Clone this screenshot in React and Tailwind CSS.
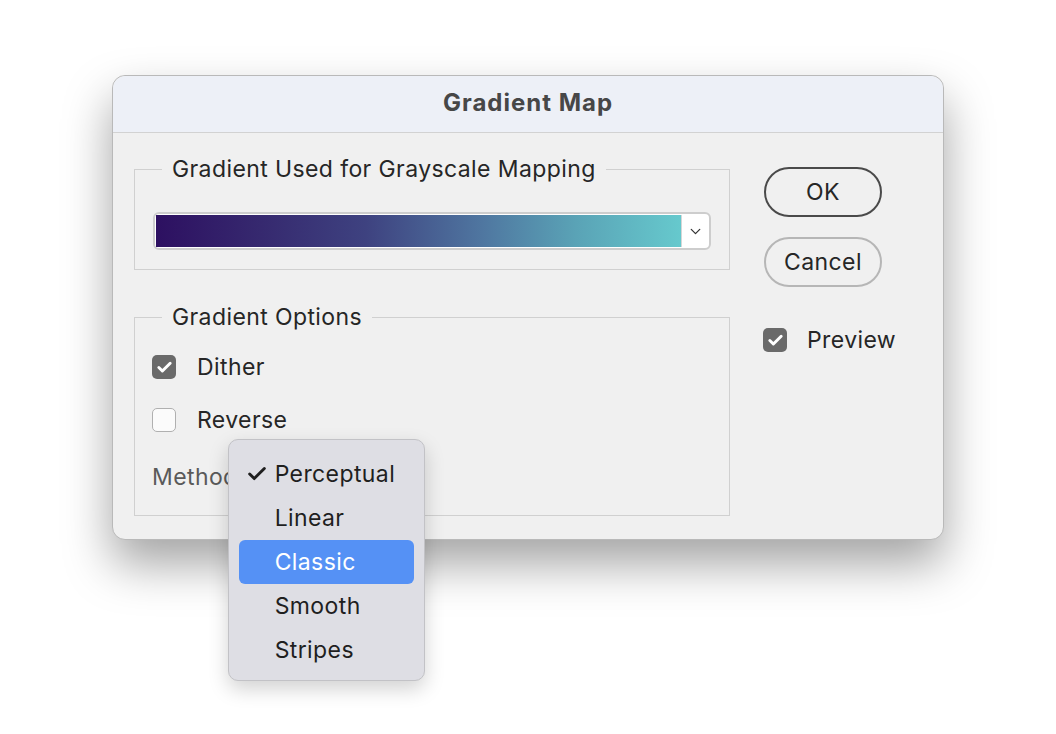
import { Check, ChevronDown } from "lucide-react";

const font = { fontFamily: "Inter, 'Noto Sans', sans-serif" };

const CheckBox = ({ checked }) =>
    checked ? (
        <span className="w-[24px] h-[24px] rounded-[5px] bg-[#6a6a6a] flex items-center justify-center shrink-0">
            <Check size={17} strokeWidth={4.2} className="text-white" />
        </span>
    ) : (
        <span className="w-[24px] h-[24px] rounded-[5px] bg-[#fbfbfb] border-[1.5px] border-[#b0b0b0] shrink-0" />
    );

const methods = ["Perceptual", "Linear", "Classic", "Smooth", "Stripes"];

export default function App() {
    return (
        <div style={font} className="w-[1056px] h-[734px] bg-white pt-[75px] pl-[112px] text-[#262626] tracking-[0.4px]">
            <div className="w-[832px] h-[465px] rounded-[13px] border border-[#b9b9b9] bg-[#f0f0f0] shadow-[0_24px_48px_rgba(0,0,0,0.36)] flex flex-col">
                {/* Title bar */}
                <div className="h-[57px] shrink-0 rounded-t-[13px] bg-[#edf0f7] border-b border-[#d2d2d2] flex items-center justify-center pb-[3px]">
                    <span className="text-[24px] font-bold text-[#474747] tracking-[1px]">Gradient Map</span>
                </div>

                {/* Body */}
                <div className="flex pl-[21px]">
                    <div className="w-[596px] pt-[23px]">
                        <fieldset className="border border-[#d0d0d0] h-[114px] px-0">
                            <legend className="ml-[27px] px-[10px] text-[23px] leading-[26px]">
                                Gradient Used for Grayscale Mapping
                            </legend>
                            <div className="ml-[18px] mt-[30px] w-[558px] h-[38px] rounded-[6px] border-2 border-[#cdcdcd] bg-white flex p-px">
                                <div className="flex-1 bg-[linear-gradient(90deg,#2d1061_0%,#36296f_20%,#3e4280_40%,#4f76a0_62%,#5aa3b6_80%,#66c9cd_100%)]" />
                                <div className="w-[27px] border-l border-[#d6d6d6] flex items-center justify-center">
                                    <ChevronDown size={17} strokeWidth={1.8} className="text-[#333]" />
                                </div>
                            </div>
                        </fieldset>

                        <fieldset className="mt-[34px] border border-[#d0d0d0] h-[212px] px-0">
                            <legend className="ml-[27px] px-[10px] text-[23px] leading-[26px]">Gradient Options</legend>
                            <div className="pl-[17px] pt-[25px] flex flex-col">
                                <div className="flex items-center gap-[21px] h-[24px]">
                                    <CheckBox checked />
                                    <span className="text-[23px]">Dither</span>
                                </div>
                                <div className="flex items-center gap-[21px] h-[24px] mt-[29px]">
                                    <CheckBox />
                                    <span className="text-[23px]">Reverse</span>
                                </div>
                                <div className="flex items-center h-[36px] mt-[27px]">
                                    <span className="text-[23px] text-[#5a5a5a]">Method:</span>
                                    <div className="relative ml-[2px]">
                                        <div className="w-[178px] h-[36px] rounded-[6px] border border-[#8c8c8c] bg-white" />
                                        {/* Popup menu */}
                                        <div className="absolute left-[-19px] top-[-20px] w-[197px] rounded-[10px] border border-[#c2c2c6] bg-[#dedee4] shadow-[0_8px_20px_rgba(0,0,0,0.18)] pt-[12px] pb-[8px] px-[10px] z-10">
                                            {methods.map((m) => (
                                                <div
                                                    key={m}
                                                    className={
                                                        m === "Classic"
                                                            ? "h-[44px] rounded-[6px] bg-[#5591f5] text-white flex items-center"
                                                            : "h-[44px] flex items-center text-[#1f1f1f]"
                                                    }
                                                >
                                                    <span className="w-[36px] flex justify-center pl-[1px]">
                                                        {m === "Perceptual" && (
                                                            <Check size={22} strokeWidth={3.2} className="text-[#1f1f1f]" />
                                                        )}
                                                    </span>
                                                    <span className="text-[23px]">{m}</span>
                                                </div>
                                            ))}
                                        </div>
                                    </div>
                                </div>
                            </div>
                        </fieldset>
                    </div>

                    {/* Right column */}
                    <div className="ml-[34px] pt-[34px] flex flex-col">
                        <button className="w-[118px] h-[50px] rounded-full border-2 border-[#4a4a4a] text-[23px] bg-transparent">
                            OK
                        </button>
                        <button className="mt-[20px] w-[118px] h-[50px] rounded-full border-2 border-[#b6b6b6] text-[23px] bg-transparent">
                            Cancel
                        </button>
                        <div className="mt-[36px] flex items-center gap-[20px] -ml-px">
                            <CheckBox checked />
                            <span className="text-[23px]">Preview</span>
                        </div>
                    </div>
                </div>
            </div>
        </div>
    );
}
